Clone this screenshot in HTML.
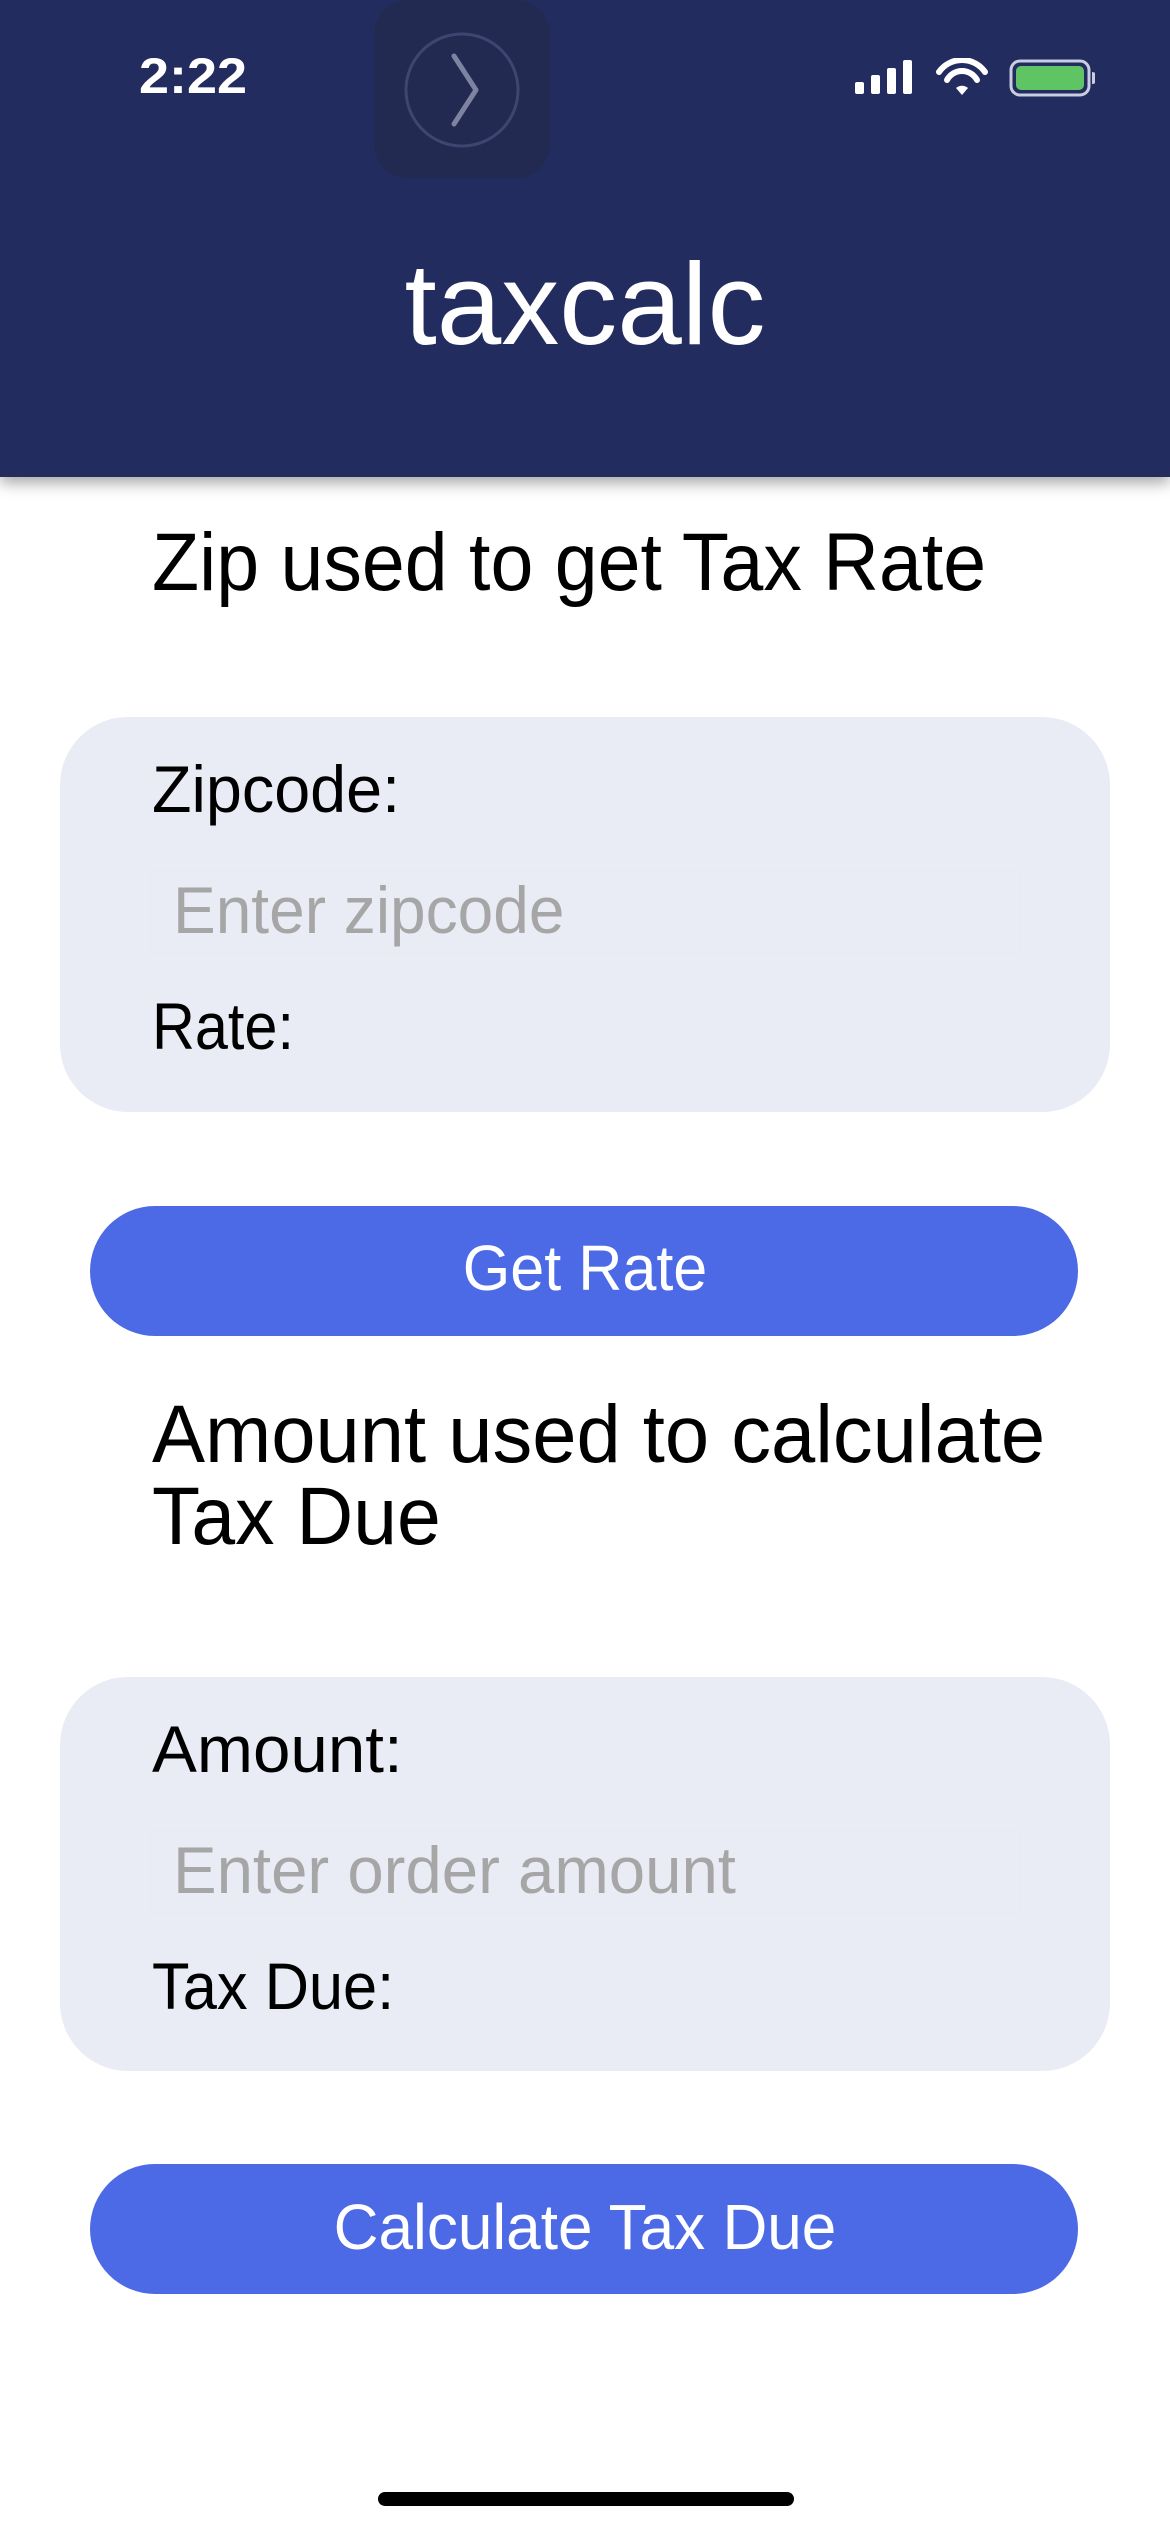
<!DOCTYPE html>
<html><head><meta charset="utf-8"><style>
*{margin:0;padding:0;box-sizing:border-box}
body{width:1170px;height:2532px;background:#fff;position:relative;overflow:hidden;font-family:"Liberation Sans",sans-serif}
.hdr{position:absolute;left:0;top:0;width:1170px;height:477px;background:#232c5e;box-shadow:0 6px 14px rgba(0,0,0,.35)}
.t{position:absolute;white-space:nowrap;line-height:1;transform-origin:left center}
.c{left:0;width:1170px;text-align:center;transform-origin:center center}
.card{position:absolute;left:60px;width:1050px;background:#eaecf5;border-radius:68px}
.btn{position:absolute;left:90px;width:988px;height:130px;background:#4c69e6;border-radius:65px}
</style></head><body>
<div class="hdr"></div>
<div class="t" style="left:139px;top:51px;font-size:50px;font-weight:bold;color:#fff;transform:scaleX(1.08)">2:22</div>
<div style="position:absolute;left:374px;top:0;width:176px;height:178px;background:#222a52;border-radius:34px"></div>
<svg style="position:absolute;left:400px;top:28px" width="124" height="124" viewBox="0 0 124 124"><circle cx="62" cy="62" r="56" fill="none" stroke="#3d4670" stroke-width="3"/><path d="M54 28 L76 62 L54 96" fill="none" stroke="#7d83a0" stroke-width="5" stroke-linecap="round" stroke-linejoin="round"/></svg>
<svg style="position:absolute;left:855px;top:58px" width="240" height="40" viewBox="0 0 240 40">
<rect x="0" y="24" width="9" height="12" rx="2" fill="#fff"/><rect x="16" y="17" width="9" height="19" rx="2" fill="#fff"/><rect x="32" y="10" width="9" height="26" rx="2" fill="#fff"/><rect x="48" y="2" width="9" height="34" rx="2" fill="#fff"/>
<path d="M84 14 A28 28 0 0 1 130 14" fill="none" stroke="#fff" stroke-width="6" stroke-linecap="round"/>
<path d="M92 22 A17 17 0 0 1 122 22" fill="none" stroke="#fff" stroke-width="6" stroke-linecap="round"/>
<path d="M101 30 L107 37 L113 30 A9 9 0 0 0 101 30Z" fill="#fff"/>
<rect x="156" y="3" width="78" height="34" rx="9" fill="none" stroke="#c9cde0" stroke-width="3"/>
<rect x="161" y="8" width="68" height="24" rx="5" fill="#5ec464"/>
<path d="M237 14 A6 6 0 0 1 237 26Z" fill="#c9cde0"/>
</svg>
<div class="t c" style="top:246px;font-size:116px;color:#fff">taxcalc</div>

<div class="t" style="left:152px;top:522px;font-size:82px;color:#000;transform:scaleX(.94)">Zip used to get Tax Rate</div>
<div class="card" style="top:717px;height:395px"></div>
<div class="t" style="left:152px;top:756px;font-size:66px;transform:scaleX(.98)">Zipcode:</div>
<div style="position:absolute;left:150px;top:870px;width:870px;height:84px;border:1px solid #e6e8f2"></div>
<div class="t" style="left:173px;top:877px;font-size:66px;color:#a6a6a6;transform:scaleX(.97)">Enter zipcode</div>
<div class="t" style="left:152px;top:993px;font-size:66px;transform:scaleX(.9)">Rate:</div>
<div class="btn" style="top:1206px"></div>
<div class="t c" style="top:1236px;font-size:64px;color:#fff;transform:scaleX(.955)">Get Rate</div>

<div class="t" style="left:152px;top:1394px;font-size:82px;transform:scaleX(.97)">Amount used to calculate</div>
<div class="t" style="left:152px;top:1476px;font-size:82px;transform:scaleX(.96)">Tax Due</div>
<div class="card" style="top:1677px;height:394px"></div>
<div class="t" style="left:152px;top:1716px;font-size:66px;transform:scaleX(1.02)">Amount:</div>
<div style="position:absolute;left:150px;top:1830px;width:870px;height:84px;border:1px solid #e6e8f2"></div>
<div class="t" style="left:173px;top:1837px;font-size:66px;color:#a6a6a6;transform:scaleX(.99)">Enter order amount</div>
<div class="t" style="left:152px;top:1953px;font-size:66px;transform:scaleX(.93)">Tax Due:</div>
<div class="btn" style="top:2164px"></div>
<div class="t c" style="top:2195px;font-size:64px;color:#fff;transform:scaleX(.97)">Calculate Tax Due</div>

<div style="position:absolute;left:378px;top:2492px;width:416px;height:14px;background:#000;border-radius:7px"></div>
</body></html>
